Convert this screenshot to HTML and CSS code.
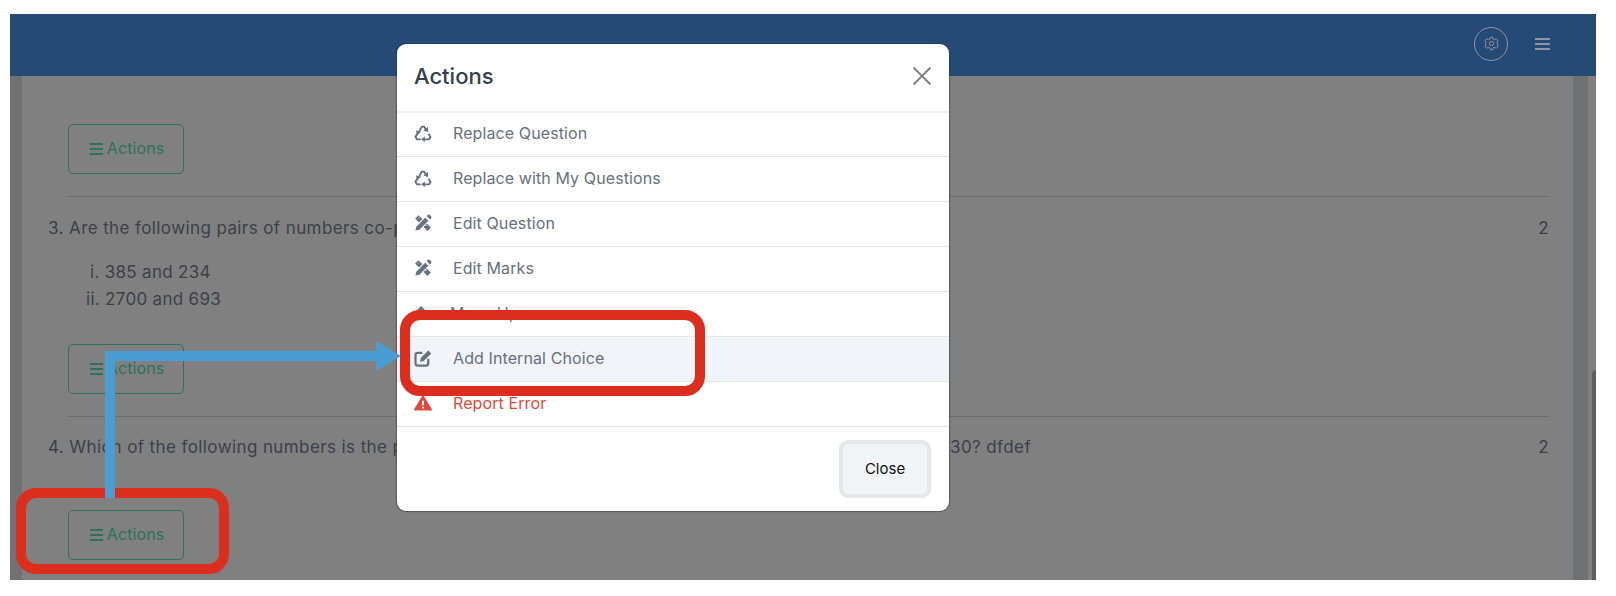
FILE: index.html
```html
<!DOCTYPE html>
<html lang="en">
<head>
  <meta charset="UTF-8">
  <meta name="viewport" content="width=device-width, initial-scale=1.0">
  <title>Actions</title>
  <link rel="stylesheet" href="styles.css">
</head>
<body>
  <div class="frame">
    <header class="topbar">
      <span class="gear-circle">
        <svg width="15" height="15" viewBox="0 0 24 24" fill="none" stroke="currentColor" stroke-width="1.600"><circle cx="12" cy="12" r="3.200"/><path d="M10 2h4l.6 3 2.400 1 2.600-1.600 2.800 2.800L20.800 9.800l1 2.200-1 2.200 1.600 2.600-2.800 2.800-2.600-1.600-2.400 1-.6 3h-4l-.6-3-2.400-1-2.600 1.600-2.800-2.800 1.600-2.600-1-2.200 1-2.200L1.600 7.200l2.800-2.800L7 6l2.400-1z"/></svg>
      </span>
      <span class="burger"><i></i><i></i><i></i></span>
    </header>
    <div class="body-row">
      <div class="rail-left"></div>
      <main class="content">
        <div class="actions-row first-actions">
          <button class="btn-actions"><span class="lines"><i></i><i></i><i></i></span>Actions</button>
        </div>
        <div class="question">
          <div class="q-line"><span>3. Are the following pairs of numbers co-prime?</span><span>2</span></div>
          <ol class="sub-list">
            <li>i. 385 and 234</li>
            <li>ii. 2700 and 693</li>
          </ol>
          <div class="actions-row">
            <button class="btn-actions"><span class="lines"><i></i><i></i><i></i></span>Actions</button>
          </div>
        </div>
        <div class="question">
          <div class="q-line"><span>4. Which of the following numbers is the product of two prime factors, one of which is 2, 3 or 11, and give 330? dfdef</span><span>2</span></div>
          <div class="actions-row">
            <button class="btn-actions"><span class="lines"><i></i><i></i><i></i></span>Actions</button>
          </div>
        </div>
      </main>
      <div class="rail-right"></div>
      <div class="scroll-track"><div class="scroll-thumb"></div></div>
    </div>
  </div>

  <div class="modal">
    <div class="modal-head">
      <h2>Actions</h2>
      <svg class="close-x" width="20" height="20" viewBox="0 0 20 20" stroke="#808080" stroke-width="1.800"><path d="M1.500 1.500l17 17M18.500 1.500l-17 17"/></svg>
    </div>
    <ul class="menu">
      <li><svg class="ico" viewBox="0 0 24 24"><use href="#i-recycle"/></svg>Replace Question</li>
      <li><svg class="ico" viewBox="0 0 24 24"><use href="#i-recycle"/></svg>Replace with My Questions</li>
      <li><svg class="ico" viewBox="0 0 24 24"><use href="#i-pen-ruler"/></svg>Edit Question</li>
      <li><svg class="ico" viewBox="0 0 24 24"><use href="#i-pen-ruler"/></svg>Edit Marks</li>
      <li class="move-up"><svg class="ico" viewBox="0 0 24 24" fill="currentColor"><path d="M12 0l11 11H1z"/></svg>Move Up</li>
      <li class="active"><svg class="ico" viewBox="0 0 24 24" fill="none" stroke="currentColor" stroke-width="3"><path d="M11 5H5a3 3 0 0 0-3 3v11a3 3 0 0 0 3 3h11a3 3 0 0 0 3-3v-6"/><path d="M8 17l1-5L19 2l4 4-10 10z" fill="currentColor" stroke="none"/></svg>Add Internal Choice</li>
      <li class="danger"><svg class="ico" viewBox="0 0 24 24"><path d="M12 3L23 21H1z" fill="currentColor" stroke="currentColor" stroke-width="2" stroke-linejoin="round"/><path d="M12 9v6M12 17v2.400" stroke="#fff" stroke-width="2.600"/></svg>Report Error</li>
    </ul>
    <div class="modal-foot">
      <button class="btn-close">Close</button>
    </div>
  </div>

  <!-- annotations drawn over the screenshot -->
  <div class="mark mark-btn"></div>
  <div class="mark mark-item"></div>
  <svg class="arrow" width="310" height="160" viewBox="0 0 310 160">
    <path d="M5 157V15H285" fill="none" stroke="#4a9cd4" stroke-width="10"/>
    <path d="M271 0l25 15-25 15z" fill="#4a9cd4"/>
  </svg>

  <svg class="defs" width="0" height="0">
    <symbol id="i-recycle" viewBox="0 0 24 24">
      <g fill="none" stroke="currentColor" stroke-width="2.600">
        <path d="M7 9.500l3.500-6h3l2.500 4"/>
        <path d="M5 12l-3 5 2 3.500h5"/>
        <path d="M19.500 13l2.500 4.500-2 3h-6"/>
      </g>
      <path d="M18.500 3.500l.5 7-6.500-1.500zM2.500 8.500l7 1.500-5 5zM14.500 16.500v7.500l-5-3.700z" fill="currentColor"/>
    </symbol>
    <symbol id="i-pen-ruler" viewBox="0 0 24 24">
      <path d="M1.500 6l4.500-4.500 6.500 6.500-4.500 4.500zM11.500 16l4.500-4.500 6.500 6.500-4.500 4.500z" fill="currentColor"/>
      <path d="M7 4.500l-1.500 1.500M17 14.500l-1.500 1.500" stroke="#fff" stroke-width="1.200"/>
      <path d="M1 23l1.300-6.300L15 4l5 5L7.300 21.700z" fill="currentColor" stroke="#fff" stroke-width="1.400"/>
      <path d="M16.800 2.700l1.200-1.200a2.400 2.400 0 0 1 3.400 0l1.100 1.100a2.400 2.400 0 0 1 0 3.400l-1.200 1.200z" fill="currentColor"/>
    </symbol>
  </svg>
</body>
</html>
```

FILE: styles.css
```css
* { box-sizing: border-box; }

html, body {
  margin: 0;
  height: 100%;
  background: #fff;
  overflow: hidden;
}

body {
  font-family: Inter, "Noto Sans", sans-serif;
  font-size: 17px;
  color: #3d4047;
  padding: 14px 20px 16px 10px;
}

/* page behind the backdrop */
.frame {
  height: 566px;
  display: flex;
  flex-direction: column;
  background: #808080;
  overflow: hidden;
}

.topbar {
  height: 62px;
  flex: none;
  background: #244a75;
  color: #8f969e;
  display: flex;
  justify-content: flex-end;
  align-items: center;
  padding: 0 46px 3px 0;
  gap: 27px;
}

.gear-circle {
  width: 34px;
  height: 34px;
  border: 1px solid #8f969e;
  border-radius: 50%;
  display: flex;
  align-items: center;
  justify-content: center;
}

.burger { display: flex; flex-direction: column; gap: 3px; width: 15px; }
.burger i { height: 2px; background: #8f969e; }

.body-row { flex: 1; display: flex; }
.rail-left { width: 12px; background: #6f7173; }
.rail-right { width: 15px; background: #6f7173; }

.content {
  flex: 1;
  min-width: 0;
  padding: 48px 24px 0 26px;
}

.actions-row { padding-left: 20px; }

.first-actions {
  padding-bottom: 22px;
}

.btn-actions {
  width: 116px;
  height: 50px;
  background: transparent;
  border: 1px solid #2c7359;
  border-radius: 5px;
  color: #2c7359;
  font: inherit;
  font-size: 16px;
  letter-spacing: 0.1px;
  display: flex;
  align-items: center;
  justify-content: center;
  gap: 4px;
  padding: 0 0 2px 2px;
}

.lines { display: flex; flex-direction: column; gap: 3px; width: 13px; margin-top: 2px; }
.lines i { height: 2px; background: #2c7359; }

.question {
  margin-left: 20px;
  margin-bottom: 22px;
  border-top: 1px solid #6c6c6c;
}

.question .actions-row { padding-left: 0; }

.q-line {
  display: flex;
  justify-content: space-between;
  margin-left: -20px;
  padding-top: 21px;
  line-height: 20px;
  letter-spacing: 0.4px;
}

.sub-list {
  list-style: none;
  margin: 21px 0 31px;
  padding: 0;
  line-height: 27px;
  letter-spacing: 0.3px;
}

.sub-list li:first-child { padding-left: 22px; }
.sub-list li:last-child { padding-left: 18px; }

.question:last-child .q-line { padding-top: 20px; margin-bottom: 53px; }

.scroll-track { width: 8px; position: relative; }

.scroll-thumb {
  position: absolute;
  left: 4px;
  right: 0;
  top: 294px;
  bottom: 0;
  background: #5f5f5f;
  border-radius: 4px 0 0 0;
}

/* dialog */
.modal {
  position: absolute;
  left: 397px;
  top: 44px;
  width: 552px;
  height: 467px;
  background: #fff;
  border-radius: 9px;
  box-shadow: 0 0 1px 1px rgba(30, 40, 60, 0.45);
  display: flex;
  flex-direction: column;
  overflow: hidden;
}

.modal-head {
  height: 69px;
  flex: none;
  display: flex;
  align-items: center;
  justify-content: space-between;
  padding: 0 17px 3px;
  border-bottom: 2px solid #eef0f3;
}

.modal-head h2 {
  margin: 0;
  font-size: 22px;
  font-weight: 500;
  color: #36404d;
}

.menu {
  list-style: none;
  margin: 0;
  padding: 0;
  color: #68717d;
  font-size: 16px;
  letter-spacing: 0.1px;
}

.menu li {
  height: 45px;
  display: flex;
  align-items: center;
  padding: 0 0 2px 17px;
  border-bottom: 1px solid #e4e6e9;
}

.menu li:first-child { height: 44px; padding-bottom: 3px; }

.ico { width: 18px; height: 18px; margin-right: 21px; flex: none; }

.menu .move-up .ico { width: 14px; height: 16px; margin-right: 22px; }
.menu .active { background: #f1f4f8; }
.menu .danger { color: #e24a3b; }

.modal-foot {
  flex: 1;
  display: flex;
  justify-content: flex-end;
  align-items: center;
  padding-right: 18px;
}

.btn-close {
  width: 92px;
  height: 58px;
  background: #f2f5f8;
  border: 4px solid #e6e7e9;
  border-radius: 9px;
  color: #111;
  font: inherit;
  font-size: 15px;
  padding: 0 0 2px;
}

/* annotations */
.mark {
  position: absolute;
  border: 10px solid #dc2e1f;
  border-radius: 20px;
}

.mark-btn { left: 16px; top: 488px; width: 213px; height: 86px; }
.mark-item { left: 400px; top: 310px; width: 305px; height: 86px; }

.arrow { position: absolute; left: 105px; top: 341px; }

.defs { position: absolute; }
```
